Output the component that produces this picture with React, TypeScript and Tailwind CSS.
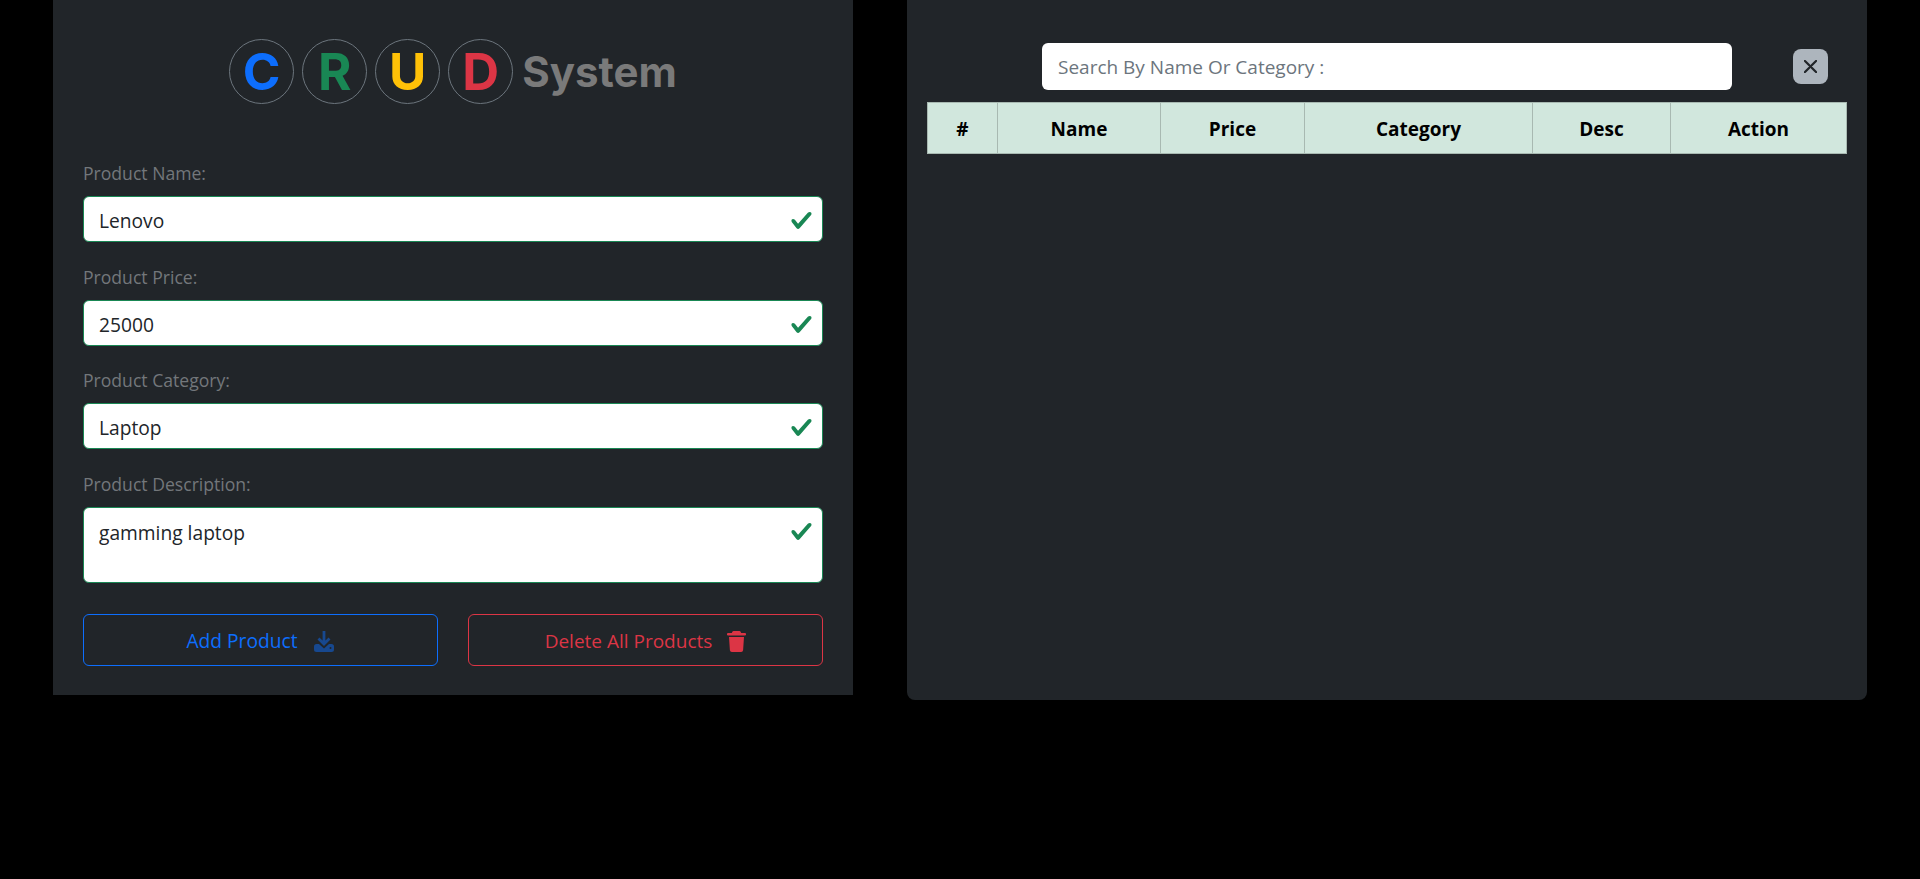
const fields = [
  { label: 'Product Name:', value: 'Lenovo' },
  { label: 'Product Price:', value: '25000' },
  { label: 'Product Category:', value: 'Laptop' },
];

const columns = [
  { title: '#', width: 'w-[70px]' },
  { title: 'Name', width: 'w-[163px]' },
  { title: 'Price', width: 'w-[144px]' },
  { title: 'Category', width: 'w-[228px]' },
  { title: 'Desc', width: 'w-[138px]' },
  { title: 'Action', width: 'w-[176px]' },
];

function ValidIcon() {
  return (
    <svg viewBox="0 0 8 8" className="absolute right-[9px] top-[12px] h-[23px] w-[23px]">
      <path
        fill="#198754"
        d="M2.3 6.73.6 4.53c-.4-1.04.46-1.4 1.1-.8l1.1 1.4 3.4-3.8c.6-.63 1.6-.27 1.2.7l-4 4.6c-.43.5-.8.4-1.1.1z"
      />
    </svg>
  );
}

function DownloadIcon() {
  return (
    <svg viewBox="0 0 22 22" className="h-[22px] w-[22px]">
      <path d="M11 1v13M5.500 8.500l5.500 5.500 5.500-5.500" fill="none" stroke="#17488f" strokeWidth="2.800" />
      <path
        fill="#17488f"
        fillRule="evenodd"
        d="M3.500 14H6l5 4.500 5-4.500h2.500a2.500 2.500 0 0 1 2.500 2.500v3a2.500 2.500 0 0 1-2.500 2.500h-15A2.500 2.500 0 0 1 1 19.500v-3A2.500 2.500 0 0 1 3.500 14zM17.500 17a1 1 0 1 0 0 2 1 1 0 0 0 0-2z"
      />
    </svg>
  );
}

function TrashIcon() {
  return (
    <svg viewBox="0 0 19 21" className="h-[21px] w-[19px]">
      <path
        fill="#dc3545"
        d="M6.500 0h6c.500 0 .900.300 1.100.700L14.200 2H18a1 1 0 0 1 0 2.400H1A1 1 0 0 1 1 2h3.800l.6-1.300C5.600.300 6 0 6.500 0zM2 6h15l-.9 13.200A2 2 0 0 1 14.100 21H4.900a2 2 0 0 1-2-1.800L2 6z"
      />
    </svg>
  );
}

function Letter({ char, color }: { char: string; color: string }) {
  return (
    <span
      className={`flex h-[65px] w-[65px] items-center justify-center rounded-full border border-[#6c757d] text-[51px] font-bold leading-none ${color}`}
    >
      {char}
    </span>
  );
}

export default function App() {
  return (
    <div className="flex h-[879px] items-start gap-[54px] overflow-hidden bg-black pl-[53px] font-['Open_Sans',sans-serif]">
      <div className="flex h-[695px] w-[800px] flex-col bg-[#212529] px-[30px]">
        <div className="mt-[39px] flex items-center justify-center gap-2 font-['Inter',sans-serif]">
          <Letter char="C" color="text-[#0d6efd]" />
          <Letter char="R" color="text-[#198754]" />
          <Letter char="U" color="text-[#ffc107]" />
          <Letter char="D" color="text-[#dc3545]" />
          <span className="ml-px text-[42px] font-bold leading-none text-[#7a7a7a]">System</span>
        </div>

        <div className="mt-[57px] flex flex-col gap-[22.500px]">
          {fields.map((f) => (
            <div key={f.label}>
              <label className="block h-[24px] text-[17.600px] leading-[24px] text-[#73777b]">{f.label}</label>
              <div className="relative mt-[11px] flex h-[46px] items-center rounded-md border border-[#198754] bg-white px-[15px] pt-[5px] text-[19.200px] text-[#212529]">
                {f.value}
                <ValidIcon />
              </div>
            </div>
          ))}
          <div>
            <label className="block h-[24px] text-[17.600px] leading-[24px] text-[#73777b]">Product Description:</label>
            <div className="relative mt-[11px] h-[76px] rounded-md border border-[#198754] bg-white px-[15px] pt-[11px] text-[19.200px] leading-[27px] text-[#212529]">
              gamming laptop
              <ValidIcon />
            </div>
          </div>
        </div>

        <div className="mt-[31px] flex gap-[30px]">
          <button className="flex h-[52px] flex-1 items-center justify-center gap-[15px] rounded-md border border-[#0d6efd] pt-[3px] text-[19.200px] text-[#0d6efd]">
            Add Product
            <DownloadIcon />
          </button>
          <button className="flex h-[52px] flex-1 items-center justify-center gap-[15px] rounded-md border border-[#dc3545] pt-[3px] text-[19px] text-[#dc3545]">
            Delete All Products
            <TrashIcon />
          </button>
        </div>
      </div>

      <div className="flex h-[700px] w-[960px] flex-col rounded-b-lg bg-[#212529] px-[20px]">
        <div className="mt-[43px] flex items-center">
          <div className="ml-[115px] flex h-[47px] w-[690px] items-center rounded-md bg-white px-[16px] pt-[2px] text-[19px] text-[#6c757d]">
            Search By Name Or Category :
          </div>
          <button className="ml-[61px] flex h-[35px] w-[35px] items-center justify-center rounded-lg bg-[#adb5bd]">
            <svg viewBox="0 0 16 16" className="h-[13px] w-[13px]">
              <path
                fill="#212529"
                stroke="#212529"
                strokeWidth="1"
                d="M.293.293a1 1 0 0 1 1.414 0L8 6.586 14.293.293a1 1 0 1 1 1.414 1.414L9.414 8l6.293 6.293a1 1 0 0 1-1.414 1.414L8 9.414l-6.293 6.293a1 1 0 0 1-1.414-1.414L6.586 8 .293 1.707a1 1 0 0 1 0-1.414z"
              />
            </svg>
          </button>
        </div>
        <table className="mt-[12px] w-[919px] table-fixed border-collapse bg-[#d1e7dd] text-black">
          <thead>
            <tr className="h-[51px]">
              {columns.map((c) => (
                <th key={c.title} className={`${c.width} border border-[#a8b9b1] pt-[2px] text-[19px] font-bold`}>
                  {c.title}
                </th>
              ))}
            </tr>
          </thead>
        </table>
      </div>
    </div>
  );
}
